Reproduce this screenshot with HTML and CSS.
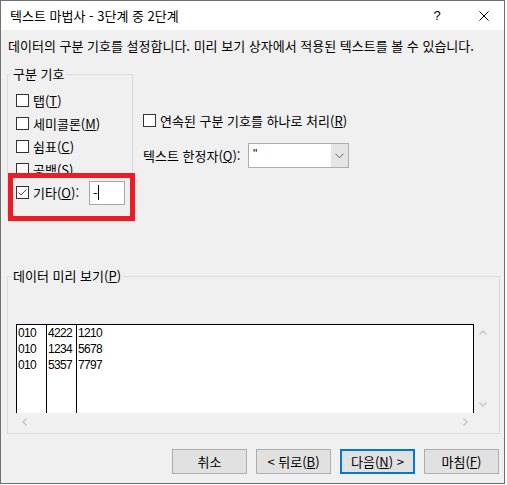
FILE: index.html
```html
<!DOCTYPE html>
<html lang="ko">
<head>
<meta charset="utf-8">
<title>텍스트 마법사</title>
<link rel="stylesheet" href="styles.css">
</head>
<body>
<div class="window">
  <div class="titlebar">
    <span class="title">텍스트 마법사 - 3단계 중 2단계</span>
    <div class="controls">
      <span class="help">?</span>
      <span class="close"><svg width="10" height="10" viewBox="0 0 10 10"><path d="M0.5 0.5L9.5 9.5M9.5 0.5L0.5 9.5" stroke="#000" stroke-width="1" fill="none"/></svg></span>
    </div>
  </div>
  <div class="content">
    <p class="desc">데이터의 구분 기호를 설정합니다. 미리 보기 상자에서 적용된 텍스트를 볼 수 있습니다.</p>
    <div class="top">
      <fieldset class="group delims">
        <legend>구분 기호</legend>
        <div class="rows">
          <div class="check"><span class="box"></span><span>탭(<u>T</u>)</span></div>
          <div class="check"><span class="box"></span><span>세미콜론(<u>M</u>)</span></div>
          <div class="check"><span class="box"></span><span>쉼표(<u>C</u>)</span></div>
          <div class="check"><span class="box"></span><span>공백(<u>S</u>)</span></div>
          <div class="check other">
            <span class="box"><svg width="11" height="11" viewBox="0 0 11 11"><path d="M1.5 5.5L4 8L9.5 2.5" stroke="#505050" stroke-width="1" fill="none"/></svg></span>
            <span class="other-label">기타(<u>O</u>):</span>
            <span class="input"><span class="dash">-</span><span class="caret"></span></span>
          </div>
        </div>
      </fieldset>
      <div class="options">
        <div class="check"><span class="box"></span><span>연속된 구분 기호를 하나로 처리(<u>R</u>)</span></div>
        <div class="qualifier">
          <span class="q-label">텍스트 한정자(<u>Q</u>):</span>
          <div class="combo">
            <span class="combo-value">"</span>
            <span class="combo-btn"><svg width="9" height="6" viewBox="0 0 9 6"><path d="M0.5 0.8L4.5 4.8L8.5 0.8" stroke="#606060" stroke-width="1" fill="none"/></svg></span>
          </div>
        </div>
      </div>
    </div>
    <fieldset class="group preview">
      <legend>데이터 미리 보기(<u>P</u>)</legend>
      <div class="list">
        <div class="sheet">
          <div class="col"><div>010</div><div>010</div><div>010</div></div>
          <div class="col"><div>4222</div><div>1234</div><div>5357</div></div>
          <div class="col last"><div>1210</div><div>5678</div><div>7797</div></div>
        </div>
        <div class="vscroll">
          <svg width="8" height="5" viewBox="0 0 8 5"><path d="M0.5 4.5L4 1L7.5 4.5" stroke="#c4c4c4" stroke-width="1.3" fill="none"/></svg>
          <svg width="8" height="5" viewBox="0 0 8 5"><path d="M0.5 0.5L4 4L7.5 0.5" stroke="#c4c4c4" stroke-width="1.3" fill="none"/></svg>
        </div>
        <div class="hscroll">
          <svg width="5" height="8" viewBox="0 0 5 8"><path d="M4.5 0.5L1 4L4.5 7.5" stroke="#c4c4c4" stroke-width="1.3" fill="none"/></svg>
          <svg width="5" height="8" viewBox="0 0 5 8"><path d="M0.5 0.5L4 4L0.5 7.5" stroke="#c4c4c4" stroke-width="1.3" fill="none"/></svg>
        </div>
        <div class="corner"></div>
      </div>
    </fieldset>
    <div class="buttons">
      <button class="btn">취소</button>
      <button class="btn">&lt; 뒤로(<u>B</u>)</button>
      <button class="btn default">다음(<u>N</u>) &gt;</button>
      <button class="btn">마침(<u>F</u>)</button>
    </div>
  </div>
</div>
</body>
</html>
```
FILE: styles.css
```css
* { box-sizing: border-box; }
html, body { margin: 0; padding: 0; background: #ffffff; }
body {
  font-family: "Noto Sans CJK KR", "Noto Sans", sans-serif;
  font-size: 13px;
  color: #000;
}
u { text-decoration: underline; text-underline-offset: 1px; }

.window {
  width: 505px;
  height: 484px;
  border: 1px solid #707070;
  background: #f0f0f0;
  display: flex;
  flex-direction: column;
}

.titlebar {
  height: 29px;
  background: #fff;
  display: flex;
  align-items: center;
  padding-left: 9px;
  flex: none;
}
.title { line-height: 16px; }
.controls { margin-left: auto; display: flex; height: 100%; }
.help {
  width: 46px;
  display: flex; align-items: center; justify-content: center;
  font-family: "Liberation Sans", sans-serif;
  font-size: 13px;
}
.close {
  width: 44px;
  display: flex; align-items: center; justify-content: center;
  padding-left: 4px;
}

.content { padding: 0 4px 0 6px; }
.desc { margin: 8px 0 0 1px; line-height: 16px; white-space: nowrap; }

.top { display: flex; margin-top: 12px; align-items: flex-start; }

.group {
  margin: 0;
  padding: 0;
  border: 1px solid #dcdcdc;
  min-width: 0;
}
.group legend {
  margin-left: 3px;
  padding: 0 2px;
  line-height: 16px;
}

.delims { width: 126px; }
.rows { padding: 7px 0 12px 8px; }

.check {
  display: flex;
  align-items: center;
  height: 23px;
  gap: 4px;
  white-space: nowrap;
}
.box {
  width: 13px; height: 13px;
  border: 1px solid #333;
  background: #fff;
  flex: none;
  display: flex; align-items: center; justify-content: center;
}

.other { position: relative; }
.other::after {
  content: "";
  position: absolute;
  left: -8px; right: -3px; top: -8px; bottom: -17px;
  border: 5px solid #ed1c24;
  pointer-events: none;
}
.other-label { width: 52px; }
.input {
  width: 36px; height: 24px;
  border: 1px solid #a8a8a8;
  background: #fff;
  display: flex; align-items: center;
  padding-left: 3px;
}
.dash { line-height: 14px; }
.caret { width: 1px; height: 15px; background: #000; }

.options { margin-left: 10px; padding-top: 43px; display: flex; flex-direction: column; }
.qualifier { display: flex; align-items: center; margin-top: 11px; }
.q-label { width: 105px; white-space: nowrap; }
.combo {
  width: 101px; height: 25px;
  border: 1px solid #adadad;
  background: #fff;
  display: flex;
}
.combo-value { flex: 1; padding-left: 4px; line-height: 21px; font-family: "Liberation Sans", sans-serif; font-size: 12px; }
.combo-btn {
  width: 17px;
  background: #e5e5e5;
  display: flex; align-items: center; justify-content: center;
}

.preview { width: 493px; margin-top: 51px; }
.list {
  margin: 40px 0 3px 8px;
  display: grid;
  grid-template-columns: 458px 17px;
  grid-template-rows: 89px 17px;
}
.sheet {
  background: #fff;
  border: 1px solid #000;
  border-bottom: none;
  display: flex;
}
.col {
  width: 30px;
  border-right: 1px solid #000;
  padding-left: 1px;
  font-family: "Liberation Sans", sans-serif;
  font-size: 12px;
  letter-spacing: -0.65px;
  line-height: 16px;
}
.col.last { border-right: none; flex: 1; }
.vscroll {
  display: flex; flex-direction: column; align-items: center; justify-content: space-between;
  padding: 6px 0 6px 1px;
}
.hscroll {
  display: flex; align-items: center; justify-content: space-between;
  padding: 0 6px;
}

.buttons {
  display: flex;
  justify-content: flex-end;
  gap: 9px;
  margin-top: 15px;
  padding-right: 1px;
}
.btn {
  width: 75px; height: 25px;
  border: 1px solid #adadad;
  background: #e1e1e1;
  font-family: "Noto Sans CJK KR", "Noto Sans", sans-serif;
  font-size: 13px;
  color: #000;
  padding: 0;
  line-height: 16px;
}
.btn.default { border: 2px solid #0078d7; }
```
